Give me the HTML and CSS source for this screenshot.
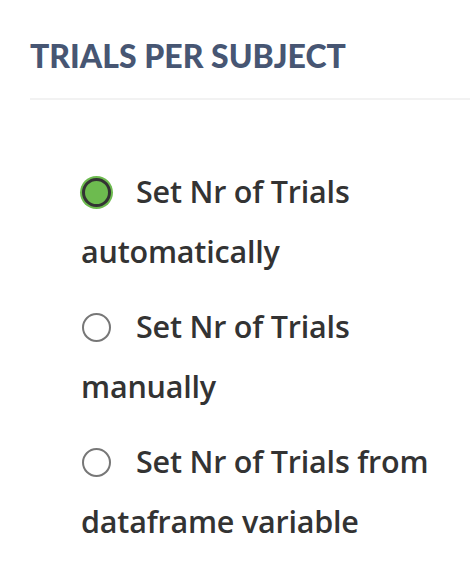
FILE: index.html
```html
<!DOCTYPE html>
<html>
<head>
  <title>Trials per subject</title>
  <link rel="stylesheet" href="styles.css">
</head>
<body>
  <div class="panel">
    <h2 class="panel-title">TRIALS PER SUBJECT</h2>
    <div class="options">
      <label class="option">
        <input type="radio" name="trials" class="radio" checked>
        <span class="label-text">Set Nr of Trials automatically</span>
      </label>
      <label class="option">
        <input type="radio" name="trials" class="radio">
        <span class="label-text">Set Nr of Trials manually</span>
      </label>
      <label class="option">
        <input type="radio" name="trials" class="radio">
        <span class="label-text">Set Nr of Trials from dataframe variable</span>
      </label>
    </div>
  </div>
</body>
</html>
```

FILE: styles.css
```css
/* Trials per subject settings panel */
body {
  margin: 0;
  background: #fff;
  font-family: Lato, "Open Sans", sans-serif;
  color: #333;
}
.panel {
  padding-left: 30px;
}
.panel-title {
  margin: 0;
  padding-top: 36px;
  padding-bottom: 22px;
  font-size: 32px;
  font-weight: 900;
  line-height: 40px;
  color: #475673;
  border-bottom: 2px solid #f2f2f2;
}
.options {
  padding: 61px 10px 0 51px;
}
.option {
  display: block;
  font-family: "Open Sans", sans-serif;
  font-size: 30.5px;
  line-height: 60px;
  margin-bottom: 15px;
  cursor: pointer;
  font-variant-ligatures: none;
}
.radio {
  appearance: none;
  -webkit-appearance: none;
  width: 29px;
  height: 29px;
  margin: 0 17px 0 1px;
  border: 2px solid #777;
  border-radius: 50%;
  vertical-align: -4px;
  box-sizing: border-box;
}
.radio:checked {
  border: 3px solid #333;
  background: #6dbb4f;
  box-shadow: 0 0 0 2px #6dbb4f;
}
.label-text {
  font-weight: 600;
  letter-spacing: -0.2px;
}
```
